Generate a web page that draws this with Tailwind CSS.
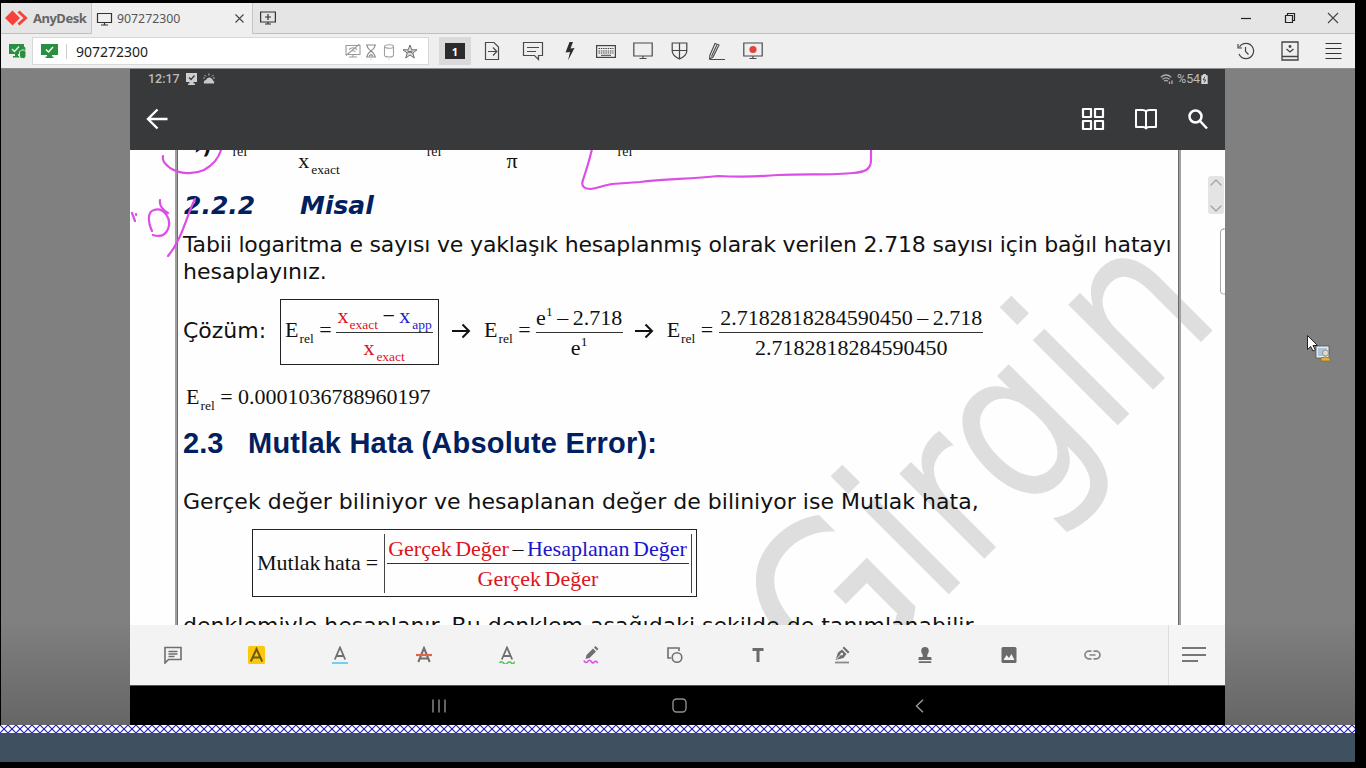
<!DOCTYPE html>
<html lang="tr">
<head>
<meta charset="utf-8">
<title>AnyDesk</title>
<script src="https://cdn.jsdelivr.net/npm/@tailwindcss/browser@4"></script>
</head>
<body class="bg-black overflow-hidden">
<div class="relative flex h-[768px] w-[1366px] flex-col overflow-hidden bg-black pt-[3px]">

  <!-- Tab bar -->
  <header class="ml-px flex h-[31px] w-[1354px] shrink-0 items-stretch bg-[#e5e5e5] font-['Noto_Sans'] text-[#3c3c3c]">
    <div class="flex w-[90px] items-center border-b border-[#bfbfbf] pl-[3px]">
      <svg class="h-[18px] w-[24px] shrink-0" viewBox="0 0 24 18"><path d="M8.500 1.500l7.500 7.500-7.500 7.500L1 9z" fill="#f4433a"/><path d="M14.500 2.500L21.500 9l-7 6.500" fill="none" stroke="#f4433a" stroke-width="3"/></svg>
      <span class="ml-[5px] pt-[2px] text-[13px] font-bold tracking-[-0.5px] text-[#666]">AnyDesk</span>
    </div>
    <div class="flex w-[162px] items-center border-x border-[#c6c6c6] bg-[#efefef] pl-[4px]">
      <svg class="h-[14px] w-[17px] shrink-0" viewBox="0 0 17 14" fill="none" stroke="#333" stroke-width="1.2"><path d="M1.500 1.500h14v9h-14zM8.500 10.500v2.500M5 13h7"/></svg>
      <span class="ml-[4px] pt-[2px] text-[12.300px] text-[#555]">907272300</span>
      <svg class="ml-[55px] h-[9px] w-[9px]" viewBox="0 0 9 9" stroke="#444" stroke-width="1.1"><path d="M.5.5l8 8M8.500.5l-8 8"/></svg>
    </div>
    <div class="flex grow items-center border-b border-[#bfbfbf] pl-[7px]">
      <svg class="h-[14px] w-[16px]" viewBox="0 0 16 14" fill="none" stroke="#333" stroke-width="1.2"><path d="M.6 1h14.800v10H.6zM8 3v6M5 6h6M8 11v2M5 13h6"/></svg>
      <div class="mr-[16px] ml-auto flex items-center gap-[31.500px]">
        <svg class="h-[12px] w-[12px]" viewBox="0 0 12 12" stroke="#222" stroke-width="1.2"><path d="M1 6.500h10"/></svg>
        <svg class="h-[12px] w-[12px]" viewBox="0 0 12 12" fill="none" stroke="#222" stroke-width="1.2"><path d="M1.500 3.500h7v7h-7zM3.500 3.500v-2h7v7h-2"/></svg>
        <svg class="h-[12px] w-[12px]" viewBox="0 0 12 12" stroke="#444" stroke-width="1.1"><path d="M1 1l10 10M11 1L1 11"/></svg>
      </div>
    </div>
  </header>

  <!-- Tool bar -->
  <nav class="ml-px flex h-[35px] w-[1354px] shrink-0 items-center border-b border-[#8f8f8f] bg-[#efefef]">
    <svg class="ml-[8px] h-[16px] w-[18px]" viewBox="0 0 18 16"><path d="M0 1h15v10H9v2h2v1.500H4V13h2v-2H0z" fill="#2a9040"/><path d="M3 6l2.500 2.500L10 3.500" fill="none" stroke="#efefef" stroke-width="1.300"/><rect x="10.500" y="7" width="6.500" height="8.500" rx="2.500" fill="#2a9040" stroke="#efefef"/><path d="M11.800 7.500V6a2 2 0 014 0v1.500" fill="none" stroke="#2a9040" stroke-width="1.300"/></svg>
    <div class="ml-[5px] flex h-[28px] w-[397px] items-center border border-[#d8d8d8] bg-white pl-[8px]">
      <svg class="h-[14px] w-[17px]" viewBox="0 0 17 14"><path d="M0 0h17v11h-6v1.500h1.500V14h-8v-1.500H6V11H0z" fill="#2a9040"/><path d="M5 5.500L7.500 8 12 3" fill="none" stroke="#fff" stroke-width="1.400"/></svg>
      <div class="ml-[8px] h-[15px] w-px bg-[#ccc]"></div>
      <span class="ml-[9px] font-['Noto_Sans'] text-[14px] text-[#1c1c1c]">907272300</span>
      <svg class="ml-[197px] h-[14px] w-[16px]" viewBox="0 0 16 14" fill="none" stroke="#9a9a9a" stroke-width="1.100"><path d="M1 1.500h14v9H1zM8 10.500V13M4 13h8M1 11.500L14.500 0M4 5.500q4-3.500 8 0M5.500 7.500q2.500-1.500 5 0"/></svg>
      <svg class="ml-[4px] h-[17px] w-[12px]" viewBox="0 0 12 17" fill="none" stroke="#8c8c8c" stroke-width="1.100"><path d="M1 2h10M1 14h10M2 2q0 3 4 6-4 3-4 6M10 2q0 3-4 6 4 3 4 6M4 13l2-1.500L8 13"/><circle cx="6" cy="16.300" r=".7" stroke="none" fill="#c4c8dc"/></svg>
      <svg class="ml-[6px] h-[17px] w-[12px]" viewBox="0 0 12 17" fill="none" stroke="#a0a0a0" stroke-width="1.100"><path d="M1.500 3.500v8.500q0 2 4.500 2t4.500-2V3.500"/><ellipse cx="6" cy="3.500" rx="4.500" ry="1.800"/><circle cx="6" cy="16.300" r=".7" stroke="none" fill="#c4c8dc"/></svg>
      <svg class="ml-[7px] h-[15px] w-[16px]" viewBox="0 0 16 15" fill="#ddd" stroke="#6c6c6c" stroke-width="1"><path d="M8 1l1.800 4.800H15L10.800 9l1.500 5L8 11l-4.300 3 1.500-5L1 5.800h5.200zM5.500 8.500l5-1.500M5.500 7l5 2"/></svg>
    </div>
    <div class="ml-[10px] flex h-[28px] w-[32px] items-center justify-center bg-[#dadada]">
      <div class="flex h-[16px] w-[20px] items-center justify-center bg-[#2b2b2b] font-['Noto_Sans'] text-[11px] leading-none font-bold text-white">1</div>
    </div>
    <svg class="ml-[13px] h-[20px] w-[16px]" viewBox="0 0 16 20" fill="none" stroke="#4a4a4a" stroke-width="1.200"><path d="M1.500 1.500h8.500l4.500 4.500v12.500h-13zM4 10.500h8.500M9 6.500l3.800 4-3.800 4"/></svg>
    <svg class="ml-[22px] h-[20px] w-[22px]" viewBox="0 0 22 20" fill="none" stroke="#4a4a4a" stroke-width="1.200"><path d="M1.500 1.500h19v13h-4v4l-4-4h-11zM5 6.500h12M5 10.500h9"/></svg>
    <svg class="ml-[21px] h-[20px] w-[10px]" viewBox="0 0 10 20" fill="#2e2e2e"><path d="M4.500 1H8L5.500 7.500l4-.5L3 19.500 5 11l-4.500.5z"/></svg>
    <svg class="ml-[21px] h-[13px] w-[20px]" viewBox="0 0 20 13" fill="none" stroke="#444"><rect x=".6" y=".6" width="18.800" height="11.800" stroke-width="1.200"/><path d="M2.500 3.500h15M2.500 6h15M2.500 8h15" stroke-dasharray="1.500 .8" stroke-width="1.200"/><path d="M5 10.300h10"/></svg>
    <svg class="ml-[17px] h-[18px] w-[20px]" viewBox="0 0 20 18" fill="none" stroke="#4a4a4a" stroke-width="1.200"><path d="M.8 1h18.400v13H.8zM10 14v2.500M6.500 16.500h7"/></svg>
    <svg class="ml-[18px] h-[18px] w-[17px]" viewBox="0 0 17 18" fill="none" stroke="#444" stroke-width="1.200"><path d="M1.200 1h14.600v8q0 4.500-7.300 8-7.300-3.500-7.300-8zM8.500 1v16M1.200 8.500h14.600"/></svg>
    <svg class="ml-[20px] h-[19px] w-[18px]" viewBox="0 0 18 19" fill="none" stroke="#4a4a4a" stroke-width="1.100"><path d="M7 1.500l4 1.500-6 12-3.500 2L2 13zM8.800 3L3.500 14.500M2 17.500h15"/></svg>
    <svg class="ml-[17px] h-[18px] w-[20px]" viewBox="0 0 20 18" fill="none" stroke="#4a4a4a" stroke-width="1.200"><path d="M.8 1h18.400v13H.8zM10 14v2.500M6.500 16.500h7"/><circle cx="10" cy="7.500" r="3.600" fill="#e2443c" stroke="none"/></svg>
    <div class="mr-[13px] ml-auto flex items-center">
      <svg class="h-[18px] w-[18px]" viewBox="0 0 18 18" fill="none" stroke="#444" stroke-width="1.200"><path d="M2.500 5A7.600 7.600 0 119 16.600 7.600 7.600 0 012 12M1 2v4h4M8.500 5v4.500l3 3"/></svg>
      <svg class="ml-[26px] h-[20px] w-[18px]" viewBox="0 0 18 20" fill="none" stroke="#444" stroke-width="1.300"><path d="M1 1h16v18H1zM1 15.500h16M5.500 8L9 11l3.500-3"/><circle cx="9" cy="5.500" r="1.400" fill="#444" stroke="none"/></svg>
      <svg class="ml-[26px] h-[18px] w-[17px]" viewBox="0 0 17 18" stroke="#333" stroke-width="1.200"><path d="M.5 1.500h16M.5 6.500h16M.5 11.500h16M.5 16.500h16"/></svg>
    </div>
  </nav>

  <!-- Remote screen -->
  <main class="ml-px flex h-[656px] w-[1354px] shrink-0 bg-[linear-gradient(to_bottom,#808080_84%,#666_100%)] pl-[129px]">
    <div class="flex w-[1095px] flex-col bg-black">
      <div class="flex h-[81px] shrink-0 flex-col bg-[#38393b]">
        <div class="flex h-[20px] items-center pl-[18px] font-[Roboto] text-[12.500px] font-medium text-[#bcbcbc]">
          <span>12:17</span>
          <svg class="ml-[5px] h-[12px] w-[13px]" viewBox="0 0 13 12"><path d="M1 0h11v9H8.500v1.500H10V12H3v-1.500h1.500V9H1z" fill="#cfcfcf"/><path d="M4 4.500L6 6.500l3.500-4" fill="none" stroke="#38393b" stroke-width="1.300"/></svg>
          <svg class="ml-[5px] h-[12px] w-[12px]" viewBox="0 0 12 12"><path d="M1 10.500q-1-3 2-3.500 1-3 4-2.500 2.500 1 3 3 2 1 1 3z" fill="#c8c8c8"/><path d="M1.500 2l1.500 1.500M6 .5v2M10.500 2L9 3.500M.3 5h1.500M10 5h1.700" stroke="#c8c8c8"/></svg>
          <svg class="ml-auto h-[11px] w-[14px]" viewBox="0 0 14 11" fill="none" stroke="#b0b0b0" stroke-width="1.300"><path d="M.8 3.300q5.200-4.500 10.400 0M2.500 5.300q3.500-3 7 0M4.200 7.200q1.800-1.500 3.600 0M9.500 7.500v2.500M12 6.500V10"/></svg>
          <span class="ml-[3px] font-normal tracking-[-0.1px]">%54</span>
          <svg class="mr-[17px] ml-px h-[10px] w-[7px]" viewBox="0 0 7 11"><path d="M2 0h3v1.500h2V11H0V1.500h2z" fill="#d8d8d8"/><path d="M4 3L2 6.500h3L3 9.500" fill="none" stroke="#38393b"/></svg>
        </div>
        <div class="flex h-[60px] items-center pl-[15px]">
          <svg class="h-[24px] w-[24px]" viewBox="0 0 24 24" fill="none" stroke="#fff" stroke-width="2.400"><path d="M22.500 12H3M12.500 2.500L3 12l9.500 9.500"/></svg>
          <svg class="ml-auto h-[24px] w-[24px]" viewBox="0 0 24 24" fill="none" stroke="#fff" stroke-width="2.200" stroke-linejoin="round"><path d="M2 2h8v8H2zM14 2h8v8h-8zM2 14h8v8H2zM14 14h8v8h-8z"/></svg>
          <svg class="ml-[29px] h-[24px] w-[24px]" viewBox="0 0 24 24" fill="none" stroke="#fff" stroke-width="2" stroke-linejoin="round"><path d="M12 4.500Q11 3 8.500 3H2v17h7q2 0 3 1.500Q13 20 15 20h7V3h-6.500Q13 3 12 4.500zM12 4v17"/></svg>
          <svg class="mr-[16px] ml-[29px] h-[22px] w-[22px]" viewBox="0 0 22 22" fill="none" stroke="#fff" stroke-width="2.500"><circle cx="8.500" cy="8.500" r="6"/><path d="M13 13l7 7.500"/></svg>
        </div>
      </div>

      <!-- Document page -->
      <article class="relative h-[475px] shrink-0 overflow-hidden bg-[#fefefe] font-['DejaVu_Sans'] text-[22px] text-[#111]">
        <svg class="absolute top-0 left-0 h-[475px] w-[1095px]" viewBox="130 150 1095 475">
          <text transform="translate(836.200 706.800) rotate(-45) scale(1 1.2)" font-family="DejaVu Sans" font-size="183" fill="#dedede">Girgin</text>
        </svg>
        <div class="relative ml-[45px] h-[475px] w-[1006px] border-x-[2px] border-[#a0a0a0] pl-[6px] whitespace-nowrap shadow-[inset_1px_0_#6a6a6a,inset_-1px_0_#6a6a6a]">
          <div class="flex h-[38px] items-start font-['Liberation_Serif']">
            <span class="-mt-[13px] ml-[11px] font-['DejaVu_Sans'] text-[20px] leading-none font-bold">›)</span>
            <span class="-mt-[5px] ml-[21px] text-[14px] leading-none">rel</span>
            <span class="-mt-[1px] ml-[51px] leading-[24px]">x<sub class="static ml-[2px] align-[-6px] text-[13.500px] leading-none">exact</sub></span>
            <span class="-mt-[5px] ml-[87px] text-[14px] leading-none">rel</span>
            <span class="-mt-[1px] ml-[65px] leading-[24px]">π</span>
            <span class="-mt-[5px] ml-[100px] text-[14px] leading-none">rel</span>
          </div>
          <h2 class="mt-px flex h-[34px] text-[25px] leading-[34px] font-bold text-[#00205f] italic"><span class="w-[117px] pl-px">2.2.2</span><span>Misal</span></h2>
          <p class="mt-[8px] h-[54px] leading-[27px]"><span class="tracking-[-0.173px]">Tabii logaritma e sayısı ve yaklaşık hesaplanmış olarak verilen 2.718 sayısı için bağıl hatayı</span><br>hesaplayınız.</p>
          <div class="mt-[13px] flex h-[67px] items-center">
            <span class="w-[97px] pb-[2px]">Çözüm:</span>
            <div class="flex h-[66px] w-[159px] items-center border border-[#222] pl-[4px] font-['Liberation_Serif']">
              <span class="pt-[2px] leading-none">E<sub class="static ml-px align-[-6px] text-[13.500px] leading-none">rel</sub> =</span>
              <div class="ml-[4px] flex w-[97px] flex-col items-center">
                <div class="h-[32px] pl-px leading-[31px] [word-spacing:-1px]"><span class="text-[#dd1420]">x<sub class="static ml-px align-[-6px] text-[13.500px] leading-none">exact</sub></span> − <span class="text-[#2420cc]">x<sub class="static ml-[2px] align-[-6px] text-[13.500px] leading-none">app</sub></span></div>
                <div class="h-px w-full bg-[#333]"></div>
                <div class="h-[31px] leading-[29px] text-[#dd1420]">x<sub class="static ml-[2px] align-[-6px] text-[13.500px] leading-none">exact</sub></div>
              </div>
            </div>
            <svg class="mr-[13px] mb-[2px] ml-[13px] h-[16px] w-[19px]" viewBox="0 0 19 16" fill="none" stroke="#111" stroke-width="2"><path d="M0 8h17M10.500 1.500L17 8l-6.500 6.500"/></svg>
            <div class="flex items-center font-['Liberation_Serif']">
              <span class="pt-[2px] leading-none">E<sub class="static ml-px align-[-6px] text-[13.500px] leading-none">rel</sub> =</span>
              <div class="ml-[5px] flex w-[87px] flex-col items-center">
                <div class="h-[29px] leading-[29px] [word-spacing:-1px]">e<sup class="static align-[9px] text-[13.500px] leading-none">1</sup> – 2.718</div>
                <div class="h-px w-full bg-[#333]"></div>
                <div class="h-[28px] leading-[29px]">e<sup class="static align-[9px] text-[13.500px] leading-none">1</sup></div>
              </div>
            </div>
            <svg class="mr-[13px] mb-[2px] ml-[12px] h-[16px] w-[19px]" viewBox="0 0 19 16" fill="none" stroke="#111" stroke-width="2"><path d="M0 8h17M10.500 1.500L17 8l-6.500 6.500"/></svg>
            <div class="flex items-center font-['Liberation_Serif']">
              <span class="pt-[2px] leading-none">E<sub class="static ml-px align-[-6px] text-[13.500px] leading-none">rel</sub> =</span>
              <div class="ml-[6px] flex w-[264px] flex-col items-center">
                <div class="h-[29px] leading-[29px] [word-spacing:-1px]">2.7182818284590450 – 2.718</div>
                <div class="h-px w-full bg-[#333]"></div>
                <div class="h-[28px] leading-[29px]">2.7182818284590450</div>
              </div>
            </div>
          </div>
          <div class="mt-[14px] ml-[3px] h-[36px] font-['Liberation_Serif'] leading-[36px]">E<sub class="static ml-px align-[-6px] text-[13.500px] leading-none">rel</sub> = 0.0001036788960197</div>
          <h1 class="mt-[10px] flex h-[36px] font-['Liberation_Sans'] text-[29px] leading-[36px] font-bold text-[#00205f]"><span class="w-[65px]">2.3</span><span class="tracking-[0.22px]">Mutlak Hata (Absolute Error):</span></h1>
          <p class="mt-[26px] h-[30px] leading-[30px] tracking-[0.02px]">Gerçek değer biliniyor ve hesaplanan değer de biliniyor ise Mutlak hata,</p>
          <div class="mt-[12px] ml-[69px] flex h-[68px] w-[445px] items-center border border-[#222] pl-[4px] font-['Liberation_Serif']">
            <span class="pb-[2px] [word-spacing:-2px]">Mutlak hata</span><span class="ml-[5px] pb-px">=</span>
            <div class="mr-[4px] ml-auto flex h-[59px] w-[308px] flex-col items-center border-x border-[#444] px-[2px]">
              <div class="h-[29px] pr-px leading-[29px] [word-spacing:-2px]"><span class="text-[#dd1420]">Gerçek Değer</span> – <span class="text-[#1a14cc]">Hesaplanan Değer</span></div>
              <div class="h-px w-full bg-[#333]"></div>
              <div class="h-[28px] leading-[29px] text-[#dd1420] [word-spacing:-2px]">Gerçek Değer</div>
            </div>
          </div>
          <p class="mt-[14px] h-[30px] leading-[30px] tracking-[0.02px]">denklemiyle hesaplanır. Bu denklem aşağıdaki şekilde de tanımlanabilir.</p>
        </div>
        <!-- Pen strokes and scroll handle -->
        <svg class="absolute top-0 left-0 h-[475px] w-[1095px]" viewBox="130 150 1095 475" fill="none" stroke="#dc4ee6" stroke-width="2.200" stroke-linecap="round" stroke-linejoin="round">
          <path d="M163 156C162 161 165 164 170 168C180 174 193 175 204 170C213 165 219 157 221 150"/>
          <path d="M592 149C589 162 586 171 583 180C581 185 583 189 591 189C598 188 601 186 612 184L640 182C665 179 690 179 718 176C740 177 755 177 778 175C810 174 835 175 853 173C866 172 871 169 871 160V149"/>
          <path d="M195 199C187 214 183 238 168 256M160 200C159 206 163 210 168 213M152 231C148 222 147 212 154 210C164 207 172 219 168 229C165 236 159 237 153 235M132 213l3 8M136 214l.1 1"/>
          <rect x="1208" y="176" width="16" height="38" rx="3" fill="#e4e4e4" stroke="none"/>
          <path d="M1211 185l5-5 5 5M1211 206l5 5 5-5" stroke="#a8a8a8" stroke-width="1.500"/>
          <rect x="1220.500" y="229" width="12" height="65" rx="3" fill="#fff" stroke="#a8a8a8" stroke-width="1"/>
        </svg>
      </article>

      <!-- Annotation tools -->
      <div class="flex h-[61px] shrink-0 border-b border-[#555] bg-[#f3f3f3]">
        <div class="flex grow items-center pl-px text-[#6a6a6a]">
          <div class="flex w-[83.640px] justify-center"><svg class="h-[18px] w-[18px]" viewBox="0 0 18 18" fill="none" stroke="#6f6f6f" stroke-width="1.600"><path d="M1 17V1.500h16v12H4.500zM4.500 5.500h9M4.500 8h9M4.500 10.500h6"/></svg></div>
          <div class="flex w-[83.640px] justify-center"><svg class="h-[18px] w-[17px]" viewBox="0 0 17 18"><rect width="17" height="18" rx="1.500" fill="#fbc80e"/><path d="M2.800 15.500L8.500 3l5.700 12.500M5 11.500h7" fill="none" stroke="#6d5a10" stroke-width="2"/></svg></div>
          <div class="flex w-[83.640px] justify-center"><svg class="h-[18px] w-[16px]" viewBox="0 0 16 18"><path d="M2.800 13.500L8 1.500l5.200 12M4.800 10h6.400" fill="none" stroke="#6f6f6f" stroke-width="1.800"/><path d="M0 17h16" stroke="#6fd0f0" stroke-width="2"/></svg></div>
          <div class="flex w-[83.640px] justify-center"><svg class="h-[18px] w-[16px]" viewBox="0 0 16 18"><path d="M2.300 16L8 2l5.700 14M4 12.500h8" fill="none" stroke="#6f6f6f" stroke-width="2"/><path d="M0 9h16" stroke="#e0664a" stroke-width="2.200"/></svg></div>
          <div class="flex w-[83.640px] justify-center"><svg class="h-[18px] w-[16px]" viewBox="0 0 16 18"><path d="M2.800 13.500L8 1.500l5.200 12M4.800 10h6.400" fill="none" stroke="#6f6f6f" stroke-width="1.800"/><path d="M.5 17q2-2.500 4 0t4 0 4 0 3-1.500" fill="none" stroke="#4cc850" stroke-width="1.600"/></svg></div>
          <div class="flex w-[83.640px] justify-center"><svg class="h-[18px] w-[16px]" viewBox="0 0 16 18"><path d="M2.500 13l1-4L10 2.500l3 3L6.500 12zM11 1.500L12.500 0l3 3L14 4.500z" fill="#6f6f6f"/><path d="M.8 14.500q2 3.500 4 1t3.500 0 3 .5 3.500 1" fill="none" stroke="#dc50e6" stroke-width="1.600"/></svg></div>
          <div class="flex w-[83.640px] justify-center"><svg class="h-[18px] w-[16px]" viewBox="0 0 16 18" fill="none" stroke="#6f6f6f" stroke-width="1.600"><path d="M4 12H1V2h11v3"/><circle cx="10" cy="11.500" r="4.800"/></svg></div>
          <div class="flex w-[83.640px] justify-center"><svg class="h-[14px] w-[12px]" viewBox="0 0 12 14"><path d="M.5 1.500h11M6 1.500V14" stroke="#6a6a6a" stroke-width="3"/></svg></div>
          <div class="flex w-[83.640px] justify-center"><svg class="h-[18px] w-[16px]" viewBox="0 0 16 18"><path d="M1.500 14L4 6.500l4-3L12.500 8l-3 4zM8.500 2L10 .5 15.500 6 14 7.500z" fill="#6f6f6f"/><path d="M2 13.500L7.500 8" stroke="#f3f3f3"/><circle cx="7.800" cy="8" r="1.300" fill="#f3f3f3"/><path d="M1 16.500h14" stroke="#8a8a8a" stroke-width="1.800"/></svg></div>
          <div class="flex w-[83.640px] justify-center"><svg class="h-[18px] w-[14px]" viewBox="0 0 14 18" fill="#6a6a6a"><path d="M7 1a3.800 3.800 0 013.800 3.800q0 2-1.500 4V11h3.200q1 0 1 1v2H.5v-2q0-1 1-1h3.200V8.800q-1.500-2-1.500-4A3.800 3.800 0 017 1zM.8 15.200h12.400V17H.8z"/></svg></div>
          <div class="flex w-[83.640px] justify-center"><svg class="h-[16px] w-[16px]" viewBox="0 0 16 16"><rect x=".5" width="15" height="16" rx="1.500" fill="#6a6a6a"/><path d="M2.500 13l3-5 2.500 3 2.500-4 3 6z" fill="#f3f3f3"/></svg></div>
          <div class="flex w-[83.640px] justify-center"><svg class="h-[10px] w-[17px]" viewBox="0 0 17 10" fill="none" stroke="#858585" stroke-width="1.700"><path d="M7.500 1.200H4.800a3.800 3.800 0 000 7.600h2.700M9.500 1.200h2.700a3.800 3.800 0 010 7.600H9.500M5.500 5h6"/></svg></div>
        </div>
        <div class="flex w-[57px] items-center border-l border-[#ddd] bg-[#f5f5f5] pl-[13px]">
          <svg class="h-[18px] w-[24px]" viewBox="0 0 24 18" stroke="#777" stroke-width="2"><path d="M0 2h24M0 9h24M0 15h16"/></svg>
        </div>
      </div>

      <!-- Android navigation -->
      <div class="flex grow items-center bg-black pl-[302px]">
        <svg class="h-[14px] w-[14px]" viewBox="0 0 14 14" stroke="#8e8e8e" stroke-width="1.400"><path d="M1 .5v13M7 .5v13M13 .5v13"/></svg>
        <svg class="ml-[226px] h-[15px] w-[15px]" viewBox="0 0 15 15" fill="none" stroke="#8e8e8e" stroke-width="1.400"><rect x="1" y="1" width="13" height="13" rx="3.500"/></svg>
        <svg class="ml-[228px] h-[14px] w-[9px]" viewBox="0 0 9 14" fill="none" stroke="#9a9a9a" stroke-width="1.400"><path d="M8 .8L1.500 7 8 13.200"/></svg>
      </div>
    </div>
  </main>

  <!-- Selection hatch and desktop strip -->
  <svg class="block h-[8px] w-[1355px] shrink-0 bg-white"><defs><pattern id="hatch" width="8" height="8" patternUnits="userSpaceOnUse"><path d="M0 0l8 8M8 0L0 8" stroke="#2018b8" stroke-width="1.100"/></pattern></defs><rect width="1355" height="8" fill="url(#hatch)"/></svg>
  <div class="h-[29px] w-[1355px] shrink-0 bg-[#3f5160]"></div>

  <!-- Pointer -->
  <svg class="absolute top-[334px] left-[1306px] h-[28px] w-[26px]" viewBox="0 0 26 28"><path d="M1.500 1.500v14l3.200-3 2.300 4.500 2.300-1.200-2.300-4.300h4.500z" fill="#fff" stroke="#222" stroke-width="1"/><rect x="11" y="13" width="11" height="10" fill="#a9c6dc" stroke="#f2f2f2" stroke-width="1.600"/><rect x="10" y="12" width="13" height="12" fill="none" stroke="#444" stroke-width=".6"/><circle cx="19.500" cy="19" r="3" fill="#e3dccd" stroke="#777" stroke-width=".7"/><path d="M15 27v-3q4.500-2 9 0v3z" fill="#e0b040" stroke="#8a6d20" stroke-width=".7"/></svg>
</div>
</body>
</html>
